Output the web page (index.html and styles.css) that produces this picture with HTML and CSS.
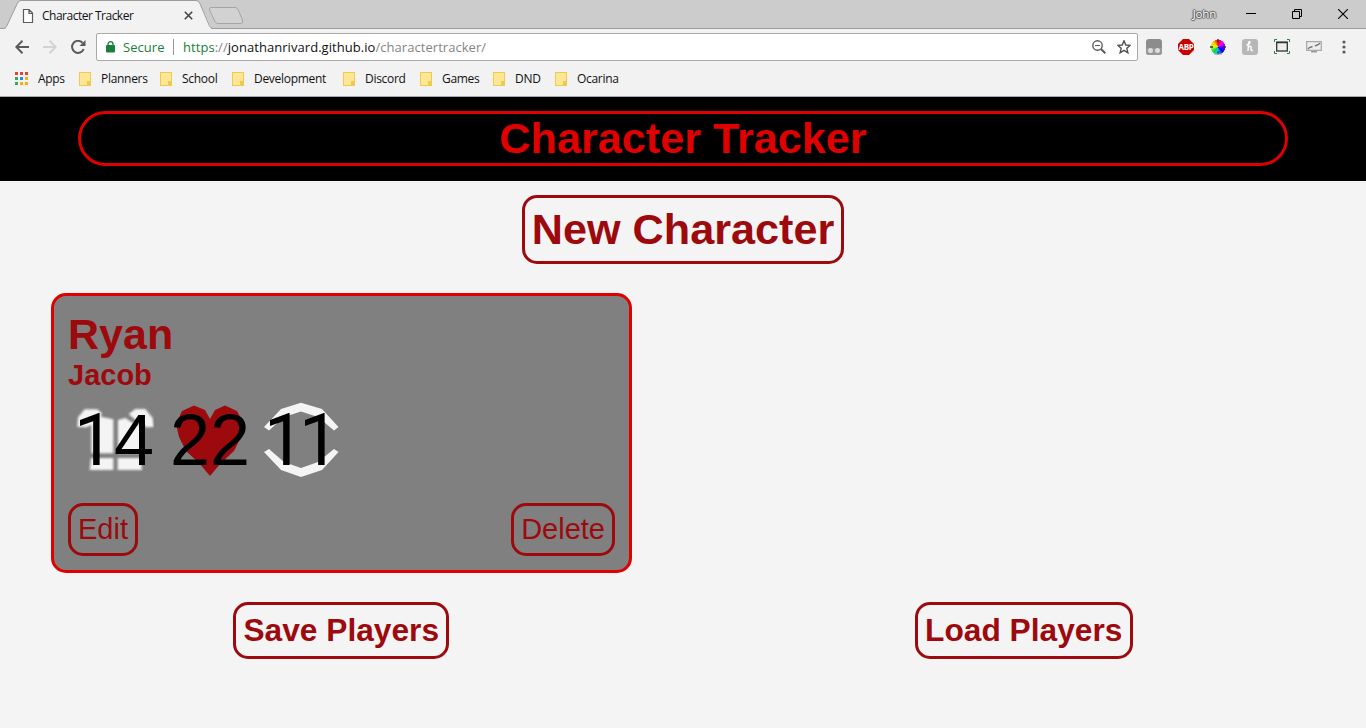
FILE: index.html
```html
<!DOCTYPE html>
<html lang="en">
<head>
<meta charset="utf-8">
<title>Character Tracker</title>
<link rel="stylesheet" href="styles.css">
</head>
<body>
<header class="browser">
  <div class="tabstrip">
    <svg class="tab-shape" width="250" height="29" viewBox="0 0 250 29"><path d="M0 28.500H5.500L17.500 3Q18.800.5 21 .5H196Q198.500.5 199.700 3L211.500 28.500V30H0Z" fill="#f2f2f2"/><path d="M0 0H18L5.500 28H0Z" fill="#ccc"/><path d="M0 28.500H3Q5.500 28.500 6.500 26.500L17.500 3Q18.800.5 21 .5H196Q198.500.5 199.700 3L209.500 26Q210.600 28.500 213 28.500H250" fill="none" stroke="#9c9c9c"/><path d="M211 7.500H235Q237 7.500 238 9.300L242.500 20Q243.300 23.500 241 23.500H218Q216 23.500 215 21.500L209.500 10Q209 7.500 211 7.500Z" fill="#d2d2d2" stroke="#a5a5a5"/></svg>
    <div class="tab">
      <svg width="12" height="15" viewBox="0 0 12 15"><path d="M1.500 1.500H7L10.500 5V14.500H1.500ZM7 1.500V5.500H10.500" fill="#fff" stroke="#5a5a5a" stroke-width="1.200"/></svg>
      <span class="tab-title">Character Tracker</span>
      <svg width="9" height="9" viewBox="0 0 9 9"><path d="M.8.8 8.200 8.200M8.200.8.800 8.200" stroke="#444" stroke-width="1.600"/></svg>
    </div>
    <div class="window-controls">
      <span class="user">John</span>
      <svg class="minimize" width="10" height="10" viewBox="0 0 10 10"><path d="M0 4.500H10" stroke="#000"/></svg>
      <svg class="restore" width="10" height="10" viewBox="0 0 10 10"><path d="M.5 2.500H7.500V9.500H.5ZM2.500 2.500V.5H9.500V7.500H7.500" fill="none" stroke="#000"/></svg>
      <svg width="10" height="10" viewBox="0 0 10 10"><path d="M0 0 10 10M10 0 0 10" stroke="#000" stroke-width="1.100"/></svg>
    </div>
  </div>
  <div class="toolbar">
    <svg class="back" width="14" height="14" viewBox="0 0 14 14"><path d="M14 7H1.500M7.500.8 1.300 7 7.500 13.200" fill="none" stroke="#5a5a5a" stroke-width="2"/></svg>
    <svg class="forward" width="14" height="14" viewBox="0 0 14 14"><path d="M0 7H12.500M6.500.8 12.700 7 6.500 13.200" fill="none" stroke="#d3d3d3" stroke-width="2"/></svg>
    <svg class="reload" width="15" height="14" viewBox="0 0 15 14"><path d="M12.700 9A6 6 0 1 1 11.500 2.800" fill="none" stroke="#5a5a5a" stroke-width="2"/><path d="M14.500 0V6H8.500Z" fill="#5a5a5a"/></svg>
    <div class="address">
      <svg width="9" height="12" viewBox="0 0 9 12"><rect y="4" width="9" height="7.500" rx="1" fill="#188038"/><path d="M2 5V3.200A2.500 2.500 0 0 1 7 3.200V5" fill="none" stroke="#188038" stroke-width="1.300"/></svg>
      <span class="secure">Secure</span><span class="divider"></span>
      <span class="url"><span class="green">https</span><span class="dim">://</span>jonathanrivard.github.io<span class="dim">/charactertracker/</span></span>
      <svg class="magnifier" width="14" height="14" viewBox="0 0 14 14"><circle cx="5.500" cy="5.500" r="4.700" fill="none" stroke="#5a5a5a" stroke-width="1.400"/><path d="M3 5.500H8" stroke="#5a5a5a"/><path d="M9 9 13.300 13.300" stroke="#5a5a5a" stroke-width="2"/></svg>
      <svg class="star" width="14" height="14" viewBox="0 0 14 14"><path d="M7 .8 8.800 5 13.300 5.300 9.800 8.300 10.900 12.800 7 10.400 3.100 12.800 4.200 8.300.7 5.300 5.200 5Z" fill="none" stroke="#505050" stroke-width="1.400"/></svg>
    </div>
    <div class="extensions">
      <svg width="16" height="16" viewBox="0 0 16 16"><rect width="16" height="16" rx="3" fill="#8c8c8c"/><path d="M0 9H16V13Q16 16 13 16H3Q0 16 0 13Z" fill="#999"/><circle cx="4.500" cy="11.500" r="2.500" fill="#ddd"/><circle cx="11.500" cy="11.500" r="2.500" fill="#ddd"/></svg>
      <svg width="16" height="16" viewBox="0 0 16 16"><path d="M5 0H11L16 5V11L11 16H5L0 11V5Z" fill="#c70000"/><text class="abp" x="7.900" y="10.800" text-anchor="middle">ABP</text></svg>
      <span class="wheel"><svg width="16" height="16" viewBox="0 0 16 16"><path d="M8 0V3M8 12.500V15.500M0 8H3M13 8H16" stroke="#333" stroke-width="1.500"/><path d="M4 15H12" stroke="#999" stroke-width="1"/></svg></span>
      <svg width="16" height="16" viewBox="0 0 16 16"><rect width="16" height="16" rx="3" fill="#b7b7b7"/><path d="M4.500 6Q8.500 5 8 3Q7 1.800 6.500 4L6 12M6.200 9Q7.500 6.500 9 7.500Q9.300 8.500 9 10.500Q9.200 12 11 11.500" fill="none" stroke="#fff" stroke-width="1.400"/></svg>
      <svg width="16" height="16" viewBox="0 0 16 16"><rect x="2.700" y="3.200" width="10.600" height="8.800" fill="#eee" stroke="#333" stroke-width="1.300"/><path d="M2.700 3.500H13.300" stroke="#333" stroke-width="1.500"/><path d="M.5 3V.5H3M13 .5H15.500V3M.5 12V14.500H3M13 14.500H15.500V12" fill="none" stroke="#2e7d32"/></svg>
      <svg width="16" height="16" viewBox="0 0 16 16"><path d="M.7 2.700H15.300V11.300H.7Z" fill="#eee" stroke="#aaa" stroke-width="1.300"/><path d="M5 12.700H11" stroke="#999" stroke-width="1.500"/><path d="M2 10 3.500 8.500 6.500 7.500M9 7 12.500 5.500 14 4" fill="none" stroke="#777" stroke-width="1.400"/></svg>
      <svg class="menu" width="4" height="14" viewBox="0 0 4 14"><g fill="#5a5a5a"><circle cx="2" cy="2" r="1.600"/><circle cx="2" cy="7" r="1.600"/><circle cx="2" cy="12" r="1.600"/></g></svg>
    </div>
  </div>
  <nav class="bookmarks">
    <span class="bookmark apps"><svg width="13" height="13" viewBox="0 0 13 13"><path d="M0 0H3V3H0ZM5 0H8V3H5ZM10 0H13V3H10Z" fill="#ea4335"/><path d="M0 5H3V8H0ZM0 10H3V13H0Z" fill="#34a853"/><path d="M5 5H8V8H5Z" fill="#1a8cff"/><path d="M10 5H13V8H10ZM5 10H8V13H5ZM10 10H13V13H10Z" fill="#fbac05"/></svg>Apps</span>
    <span class="bookmark planners"><i class="folder"></i>Planners</span>
    <span class="bookmark school"><i class="folder"></i>School</span>
    <span class="bookmark development"><i class="folder"></i>Development</span>
    <span class="bookmark discord"><i class="folder"></i>Discord</span>
    <span class="bookmark games"><i class="folder"></i>Games</span>
    <span class="bookmark dnd"><i class="folder"></i>DND</span>
    <span class="bookmark"><i class="folder"></i>Ocarina</span>
  </nav>
</header>
<main>
  <div class="banner"><h1 class="title">Character Tracker</h1></div>
  <div class="create"><button class="button large">New Character</button></div>
  <section class="card">
    <h2 class="name">Ryan</h2>
    <h3 class="player">Jacob</h3>
    <div class="stats">
      <div class="stat armor"><svg width="80" height="76" viewBox="0 0 80 76"><g class="shirt" transform="translate(-24 -112) scale(.33333)"><path d="M82 411 84 382 104 358H142L156 370 152 380 190 388V490H124V404L110 412Z"/><path d="M204 490V390L226 384 248 398 262 404 273 400V490Z"/><path d="M236 372 256 357H286L308 384 311 411 288 412 252 386Z"/><path d="M123 504H190V540H119ZM203 504H272L276 540H203Z"/></g></svg><span><span class="one">1</span>4</span></div>
      <div class="stat health"><svg width="80" height="76" viewBox="0 0 80 76"><path d="M40 17 35 8 24 3.500 12 9 6 22 9 35 16 49 29 61 40 74 51 61 64 49 71 35 74 22 67 9 55 3.500 45 8Z" fill="#9d0a0e"/></svg><span>22</span></div>
      <div class="stat initiative"><svg width="80" height="76" viewBox="0 0 80 76"><path d="M0 25 17 7 37 .7 58 7 74.500 25 70 28.500 54 15 37 9.500 20 15 5 28.500ZM0 50 5 47 20 60 37 66 54 60 70 47 74.500 50 58 68 37 75 17 68Z" fill="#f4f4f4"/></svg><span><span class="one kerned">11</span></span></div>
    </div>
    <div class="actions"><button class="button small">Edit</button><button class="button small">Delete</button></div>
  </section>
  <div class="storage"><div><button class="button medium save">Save Players</button></div><div><button class="button medium load">Load Players</button></div></div>
</main>
</body>
</html>
```
FILE: styles.css
```css
* { box-sizing: border-box; }
body { margin: 0; background: #f4f4f4; font-family: "Liberation Sans", Arial, sans-serif; height: 728px; overflow: hidden; }
svg { display: block; flex: none; }
.browser { height: 97px; background: #f2f2f2; border-bottom: 1px solid #a9a9a9; font: 12px "Open Sans", "Noto Sans", sans-serif; letter-spacing: -.5px; color: #111; }
.tabstrip { height: 29px; background: linear-gradient(#ccc 28px, #9c9c9c 28px); display: flex; justify-content: space-between; position: relative; }
.tab-shape { position: absolute; left: 0; top: 0; }
.tab { position: relative; display: flex; align-items: center; width: 193px; padding: 1px 0 0 22px; }
.tab-title { flex: 1; margin-left: 8px; }
.window-controls { display: flex; align-items: center; padding: 0 18px 2px 0; }
.user { color: #fff; margin-right: 30px; font-size: 11.500px; letter-spacing: -.2px; text-shadow: 1px 0 1px #555, -1px 0 1px #555, 0 1px 1px #555, 0 -1px 1px #555; }
.minimize, .restore { margin-right: 36px; }
.toolbar { height: 36px; display: flex; align-items: center; padding-left: 15px; }
.back { margin-right: 14px; }
.forward { margin-right: 14px; }
.reload { margin-right: 10px; }
.address { width: 1042px; height: 28px; border: 1px solid #a9a9a9; border-radius: 2px; background: #fff; display: flex; align-items: center; padding: 0 6px 0 9px; font-size: 13px; letter-spacing: .05px; }
.secure { color: #188038; margin-left: 8px; width: 42px; }
.divider { width: 1px; height: 16px; background: #999; margin: 0 9px 0 8px; }
.url { flex: 1; }
.green { color: #188038; }
.dim { color: #848484; }
.magnifier { margin-right: 11px; }
.extensions { display: flex; align-items: center; gap: 16px; margin-left: 8px; }
.abp { font: bold 8px "Open Sans", sans-serif; fill: #fff; letter-spacing: -.4px; }
.wheel { width: 16px; height: 16px; background: radial-gradient(circle, transparent 7px, #f2f2f2 7.500px), conic-gradient(red, #f0f, #60f, #00f, #0cf, #0d4, #cf0, #fc0, red); }
.menu { margin-left: 4px; }
.bookmarks { display: flex; align-items: center; height: 28px; padding-left: 15px; letter-spacing: -.3px; }
.bookmark { display: flex; align-items: center; gap: 10px; height: 17px; padding-bottom: 1px; }
.apps { width: 64px; }
.planners { width: 81px; }
.school { width: 72px; }
.development { width: 111px; }
.discord { width: 77px; }
.games { width: 73px; }
.dnd { width: 62px; }
.folder { width: 12px; height: 14px; border: 1px solid #edca50; background: linear-gradient(#edca50, #edca50) 100% 100% / 3px 4px no-repeat, #ffe694; }
h1, h2, h3 { margin: 0; }
.banner { height: 84px; background: #000; padding: 14px 78px 0; }
.title { height: 55px; border: 3px solid #df0000; border-radius: 28px; color: #df0000; font-size: 43.200px; line-height: 48px; text-align: center; }
.create { text-align: center; height: 112px; padding-top: 14px; }
.button { font-family: inherit; color: #9d0a0e; background: none; border: 3px solid #9d0a0e; border-radius: 15px; padding: 0 7px; }
.large { font-size: 43.200px; font-weight: bold; width: 322px; height: 69px; padding: 0; }
.medium { font-size: 31.700px; font-weight: bold; height: 57px; padding: 0; }
.save { width: 216px; }
.load { width: 218px; }
.small { font-size: 29px; height: 53px; }
.card { width: 581px; height: 280px; margin-left: 51px; border: 3px solid #df0000; border-radius: 15px; background: #808080; padding: 14px; color: #9d0a0e; }
.name { font-size: 43px; line-height: 48px; }
.player { font-size: 29px; line-height: 34px; }
.stats { display: flex; height: 111px; padding: 10px 0 0 6px; }
.stat { display: grid; width: 80px; height: 76px; color: #000; font-size: 72px; line-height: 76px; white-space: nowrap; }
.stat > * { grid-area: 1 / 1; }
.one { display: inline-block; width: 40px; height: 76px; vertical-align: top; font-family: Roboto, sans-serif; line-height: 77px; }
.kerned { width: 80px; letter-spacing: -5.500px; }
.armor { margin-right: 16px; }
.health { margin-right: 14px; }
.shirt { fill: #f4f4f4; filter: blur(3.500px); }
.actions { display: flex; justify-content: space-between; }
.storage { display: grid; grid-template-columns: 1fr 1fr; text-align: center; margin-top: 29px; padding-right: 1px; }
```
